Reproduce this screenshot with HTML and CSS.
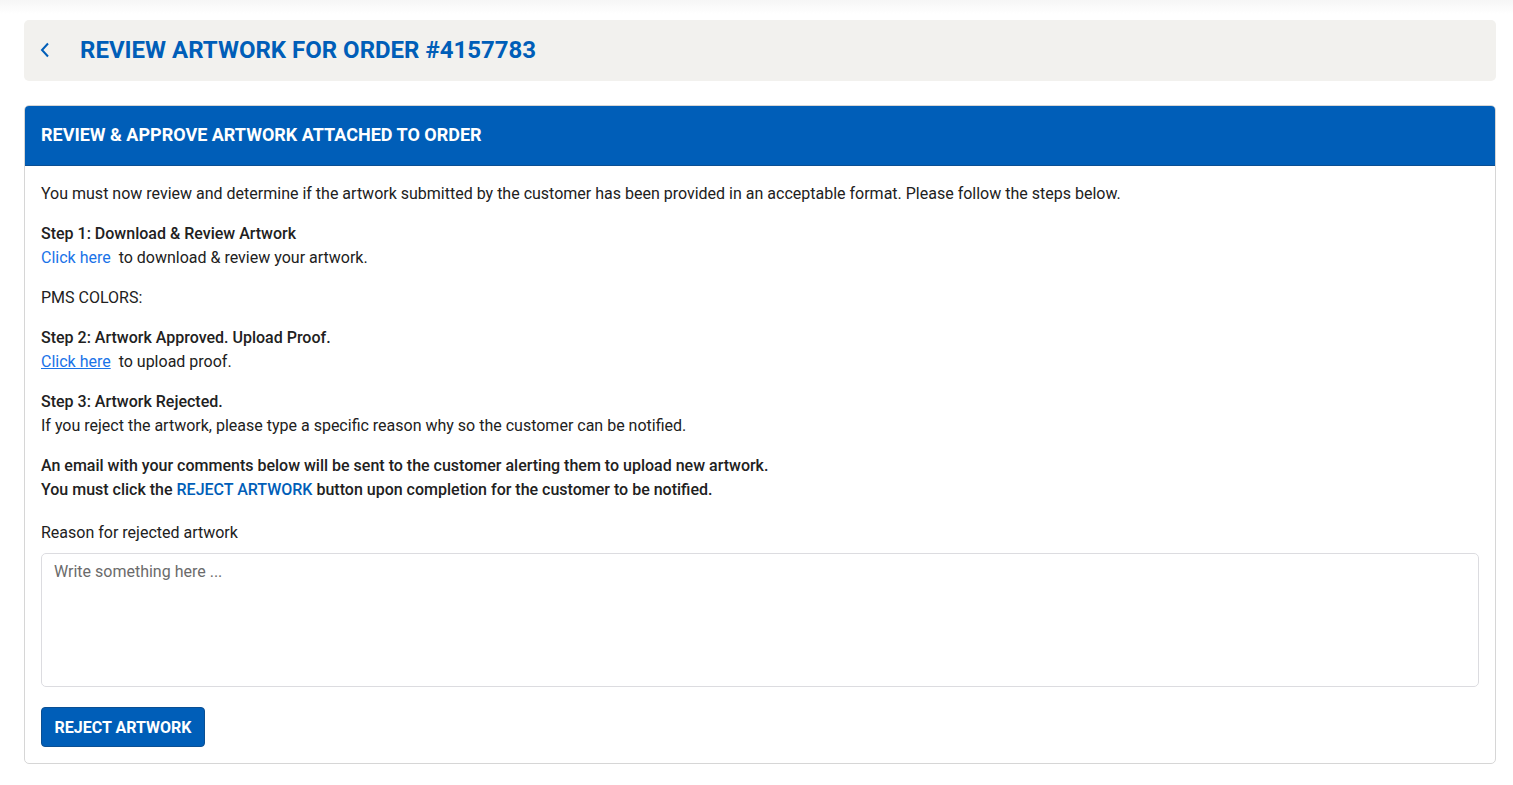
FILE: index.html
```html
<!DOCTYPE html>
<html lang="en">
<head>
    <meta charset="UTF-8">
    <title>Review Artwork</title>
    <link rel="stylesheet" href="styles.css">
</head>
<body>
    <div class="page">
        <div class="page-head">
            <a class="back" href="#">
                <svg width="10" height="16" viewBox="0 0 10 16"><path d="M8 1.5 L2 8 L8 14.5" fill="none" stroke="#005eb8" stroke-width="2"/></svg>
            </a>
            <h1>REVIEW ARTWORK FOR ORDER #4157783</h1>
        </div>

        <div class="panel">
            <div class="panel-head">REVIEW &amp; APPROVE ARTWORK ATTACHED TO ORDER</div>
            <div class="panel-body">
                <p>You must now review and determine if the artwork submitted by the customer has been provided in an acceptable format. Please follow the steps below.</p>

                <p><b>Step 1: Download &amp; Review Artwork</b><br>
                <a class="link" href="#">Click here</a>&nbsp; to download &amp; review your artwork.</p>

                <p>PMS COLORS:</p>

                <p><b>Step 2: Artwork Approved. Upload Proof.</b><br>
                <a class="link underline" href="#">Click here</a>&nbsp; to upload proof.</p>

                <p><b>Step 3: Artwork Rejected.</b><br>
                If you reject the artwork, please type a specific reason why so the customer can be notified.</p>

                <p class="notice">An email with your comments below will be sent to the customer alerting them to upload new artwork.<br>
                You must click the <span class="hl">REJECT ARTWORK</span> button upon completion for the customer to be notified.</p>

                <label class="field-label" for="reason">Reason for rejected artwork</label>
                <textarea id="reason" placeholder="Write something here ..."></textarea>

                <button class="btn">REJECT ARTWORK</button>
            </div>
        </div>
    </div>
</body>
</html>
```

FILE: styles.css
```css
:root {
    --brand: #005eb8;
}

body {
    margin: 0;
    background: #fff;
    font-family: Roboto, "Liberation Sans", sans-serif;
    color: #212121;
}

.page {
    padding: 20px 17px 20px 24px;
    background: linear-gradient(#f6f6f6, #fff 14px);
}

.page-head {
    display: flex;
    align-items: center;
    box-sizing: border-box;
    height: 61px;
    padding-bottom: 1px;
    background: #f2f1ee;
    border-radius: 5px;
    padding-left: 16px;
}

.back {
    display: flex;
    width: 40px;
}

.page-head h1 {
    margin: 0;
    font-size: 24px;
    font-weight: 700;
    color: var(--brand);
}

.panel {
    margin-top: 24px;
    border: 1px solid #d6d6d6;
    border-radius: 5px;
    overflow: hidden;
}

.panel-head {
    background: var(--brand);
    color: #fff;
    font-weight: 700;
    font-size: 18px;
    height: 59px;
    line-height: 57px;
    padding-left: 16px;
    border-bottom: 1px solid #0b4f93;
}

.panel-body {
    padding: 16px 16px 16px 16px;
    font-size: 16px;
    line-height: 24px;
}

.panel-body p {
    margin: 0 0 16px;
}

.panel-body b {
    font-weight: 500;
}

.link {
    color: #1a73e8;
    text-decoration: none;
}

.link.underline {
    text-decoration: underline;
}

.notice {
    font-weight: 500;
}

.hl {
    color: var(--brand);
}

.field-label {
    display: block;
    margin-top: 19px;
}

textarea {
    display: block;
    box-sizing: border-box;
    width: 100%;
    height: 134px;
    margin-top: 8px;
    padding: 8px 12px;
    border: 1px solid #dcdce0;
    border-radius: 5px;
    font-family: inherit;
    font-size: 16px;
    line-height: 20px;
    resize: none;
}

textarea::placeholder {
    color: #6b6b6b;
}

.btn {
    display: block;
    margin-top: 20px;
    width: 164px;
    height: 40px;
    padding: 0;
    background: var(--brand);
    color: #fff;
    border: 1px solid #0b4f93;
    border-radius: 4px;
    font-family: inherit;
    font-weight: 700;
    font-size: 16px;
}
```
